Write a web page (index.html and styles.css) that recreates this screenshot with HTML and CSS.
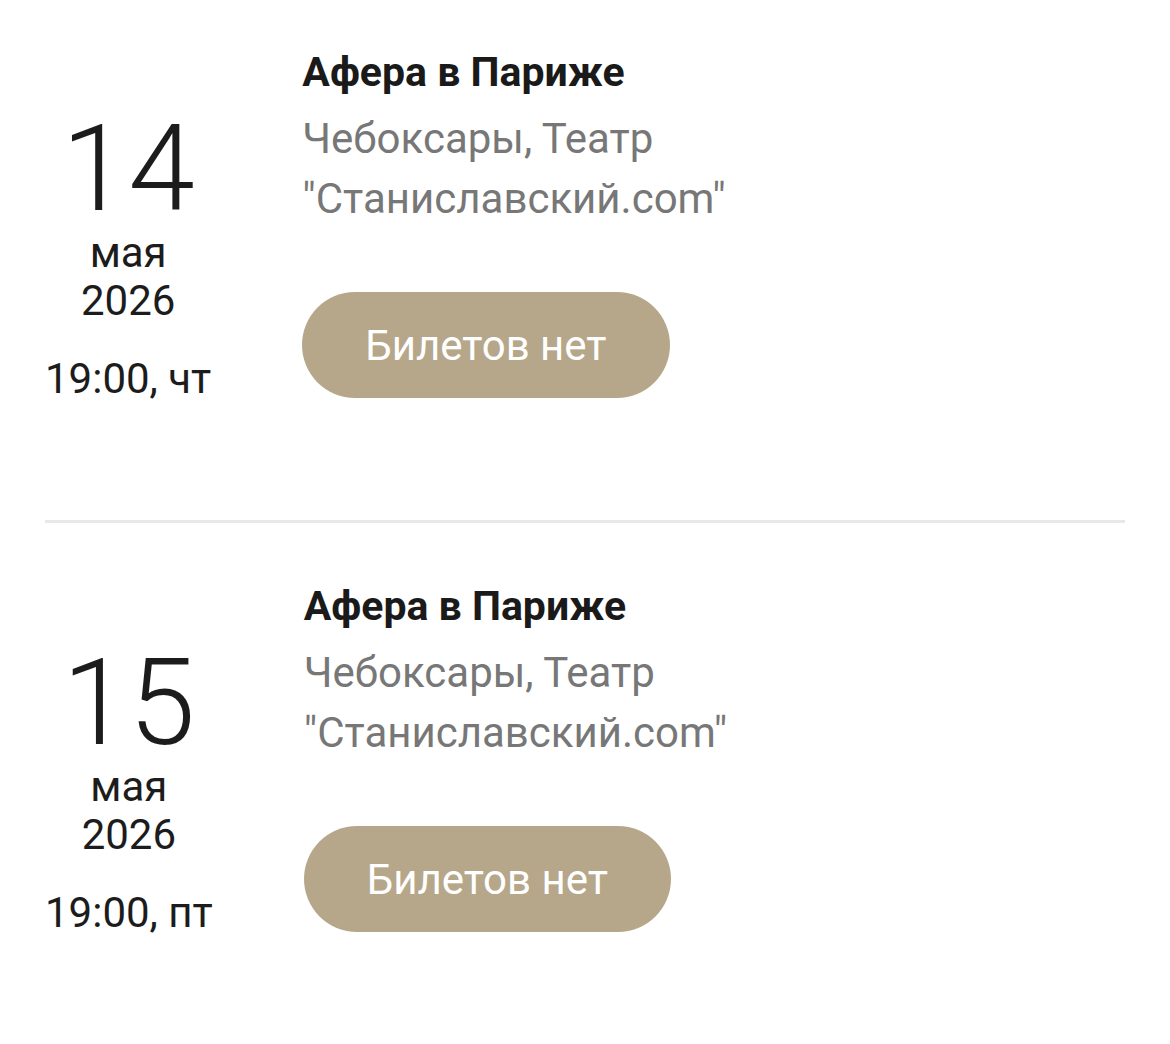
FILE: index.html
```html
<!DOCTYPE html>
<html lang="ru">
<head>
  <meta charset="UTF-8">
  <title>Афиша</title>
  <meta name="viewport" content="width=device-width, initial-scale=1.0">
  <link rel="stylesheet" href="styles.css">
</head>
<body>

  <div class="events">

    <div class="event">
      <div class="event-date">
        <div class="day">14</div>
        <div class="month">мая</div>
        <div class="year">2026</div>
        <div class="time">19:00, чт</div>
      </div>
      <div class="event-info">
        <div class="title">Афера в Париже</div>
        <div class="place">Чебоксары, Театр<br>"Станиславский.com"</div>
        <button class="btn-tickets" disabled>Билетов нет</button>
      </div>
    </div>

    <div class="event">
      <div class="event-date">
        <div class="day">15</div>
        <div class="month">мая</div>
        <div class="year">2026</div>
        <div class="time">19:00, пт</div>
      </div>
      <div class="event-info">
        <div class="title">Афера в Париже</div>
        <div class="place">Чебоксары, Театр<br>"Станиславский.com"</div>
        <button class="btn-tickets" disabled>Билетов нет</button>
      </div>
    </div>

  </div>

</body>
</html>
```

FILE: styles.css
```css
body {
  margin: 0;
  padding: 0;
  font-family: Roboto, "Noto Sans", sans-serif;
  color: #1c1c1c;
  background: #fff;
  overflow: hidden;
}

/* список спектаклей (прокручен чуть вниз) */
.events {
  padding: 0 45px;
  margin-top: -11px;
}

.event {
  display: flex;
  align-items: flex-start;
  gap: 91px;
  padding: 59px 0 117px;
  border-bottom: 3px solid #e8e8e8;
}

/* колонка с датой */
.event-date {
  margin-top: 61px;
  text-align: center;
  font-size: 42px;
  line-height: 48px;
}
.day {
  font-size: 120px;
  font-weight: 300;
  line-height: 120px;
}
.time { margin-top: 30px; }

/* описание и кнопка */
.event-info {
  display: flex;
  flex-direction: column;
  align-items: flex-start;
}
.title {
  font-size: 41px;
  font-weight: 700;
  line-height: 48px;
  color: #1a1a1a;
}
.place {
  margin-top: 13px;
  font-size: 42px;
  line-height: 60px;
  color: #777;
}
.btn-tickets {
  margin-top: 63px;
  height: 106px;
  padding: 0 63px;
  border: none;
  border-radius: 53px;
  background: #b6a78a;
  color: #fff;
  font-family: inherit;
  font-size: 42px;
}
```
